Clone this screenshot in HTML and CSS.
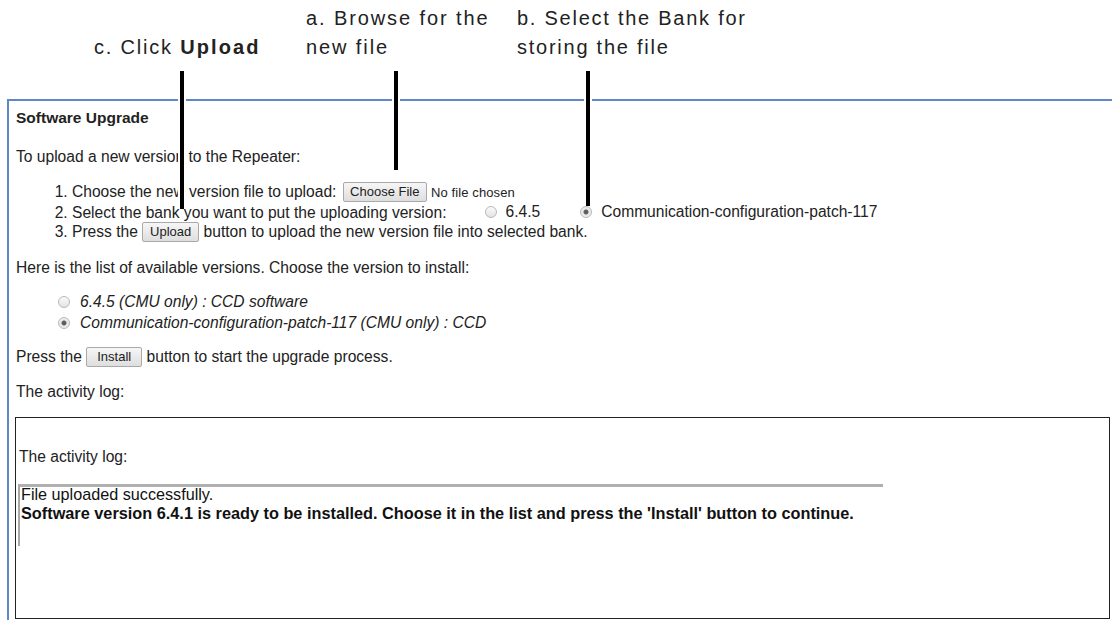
FILE: index.html
```html
<!DOCTYPE html>
<html>
<head>
<meta charset="utf-8">
<link rel="stylesheet" href="styles.css">
</head>
<body>
<div class="page">
  <div class="callouts">
    <div class="callout callout-c">c. Click <b>Upload</b></div>
    <div class="callout callout-a">a. Browse for the<br>new file</div>
    <div class="callout callout-b">b. Select the Bank for<br>storing the file</div>
  </div>

  <div class="frame">
    <h1 class="title">Software Upgrade</h1>
    <p class="intro">To upload a new version to the Repeater:</p>
    <ol class="steps">
      <li>Choose the new version file to upload: <span class="btn btn-file">Choose File</span> <span class="nofile">No file chosen</span></li>
      <li>Select the bank you want to put the uploading version:<span class="bank bank-1"><span class="radio"></span>6.4.5</span><span class="bank bank-2"><span class="radio checked"></span>Communication-configuration-patch-117</span></li>
      <li>Press the <span class="btn btn-upload">Upload</span> button to upload the new version file into selected bank.</li>
    </ol>
    <p class="avail">Here is the list of available versions. Choose the version to install:</p>
    <ul class="versions">
      <li><span class="radio"></span><i>6.4.5 (CMU only) : CCD software</i></li>
      <li><span class="radio checked"></span><i>Communication-configuration-patch-117 (CMU only) : CCD</i></li>
    </ul>
    <p class="press">Press the <span class="btn btn-install">Install</span> button to start the upgrade process.</p>
    <p class="logtitle">The activity log:</p>
    <div class="logbox">
      <p class="logbox-title">The activity log:</p>
      <div class="logarea">
        <div class="logtext">
          <div>File uploaded successfully.</div>
          <div class="strong">Software version 6.4.1 is ready to be installed. Choose it in the list and press the 'Install' button to continue.</div>
        </div>
      </div>
    </div>
  </div>

  <span class="pointer pointer-c"></span>
  <span class="pointer pointer-a"></span>
  <span class="pointer pointer-b"></span>
</div>
</body>
</html>
```

FILE: styles.css
```css
html, body {
  margin: 0;
  padding: 0;
  background: #fff;
}
body {
  font-family: "Liberation Sans", Arial, sans-serif;
  color: #222;
  overflow: hidden;
}
.page {
  position: relative;
  width: 1112px;
  height: 620px;
  overflow: hidden;
}

/* callouts */
.callouts {
  display: flex;
  align-items: flex-start;
  height: 99px;
  padding-top: 4px;
  padding-left: 94px;
  box-sizing: border-box;
}
.callout {
  font-size: 20px;
  line-height: 29px;
  letter-spacing: 1.9px;
  color: #222;
}
.callout-c {
  width: 212px;
  margin-top: 29px;
  letter-spacing: 1.8px;
}
.callout-c b {
  letter-spacing: 2.1px;
}
.callout-a {
  width: 211px;
}
.callout-b {
  letter-spacing: 1.75px;
}

/* pointers (overlay) */
.pointer {
  position: absolute;
  top: 71px;
  width: 4px;
  background: #000;
  border-left: 2px solid #fff;
  border-right: 2px solid #fff;
}
.pointer-c { left: 178px; height: 138px; }
.pointer-a { left: 392px; height: 99px; }
.pointer-b { left: 584px; height: 135px; }

/* frame */
.frame {
  margin-left: 7px;
  border-top: 2px solid #5f89c5;
  border-left: 2px solid #5f89c5;
  padding-left: 7px;
  padding-right: 2px;
  font-size: 15.6px;
  line-height: 16px;
  height: 560px;
  box-sizing: border-box;
}
.title {
  font-size: 15.5px;
  font-weight: bold;
  margin: 9px 0 0;
  line-height: 16px;
}
.intro {
  margin: 23px 0 0;
}
.steps {
  margin: 17px 0 0;
  padding-left: 56px;
  line-height: 20px;
}
.steps li {
  height: 20px;
}
.btn {
  display: inline-block;
  box-sizing: border-box;
  height: 20px;
  line-height: 18px;
  font-size: 13px;
  border: 1px solid #a9a9a9;
  border-radius: 2px;
  background: linear-gradient(#f6f6f6, #dedede);
  color: #222;
  vertical-align: middle;
  text-align: center;
  position: relative;
  top: -1px;
}
.btn-file { width: 84px; margin-left: 2px; }
.btn-upload { width: 57px; }
.btn-install { width: 56px; }
.nofile {
  font-size: 13px;
  letter-spacing: 0.1px;
}
.bank {
  display: inline-flex;
  align-items: center;
}
.bank-1 { margin-left: 38px; }
.bank-2 { margin-left: 40px; }
.bank .radio { margin-right: 9px; }

.radio {
  display: inline-block;
  width: 12px;
  height: 12px;
  box-sizing: border-box;
  border-radius: 50%;
  border: 1px solid #b9b9b9;
  background: linear-gradient(#fafafa, #e4e4e4);
  vertical-align: middle;
  flex: none;
}
.radio.checked {
  background: radial-gradient(circle, #555 0, #666 2px, #e8e8e8 3px, #f4f4f4 100%);
}

.avail {
  margin: 18px 0 0;
}
.versions {
  list-style: none;
  margin: 15px 0 0;
  padding-left: 42px;
  line-height: 21px;
}
.versions li {
  display: flex;
  align-items: center;
  height: 21px;
}
.versions .radio {
  margin-right: 10px;
}
.press {
  margin: 14px 0 0;
  line-height: 20px;
}
.logtitle {
  margin: 16px 0 0;
}
.logbox {
  margin: 17px 0 0 -1px;
  border: 1px solid #222;
  height: 202px;
  box-sizing: border-box;
  padding: 31px 3px 0 2px;
}
.logbox-title {
  margin: 0;
  padding-left: 1px;
}
.logarea {
  margin-top: 19px;
  width: 865px;
  height: 62px;
  box-sizing: border-box;
  border-top: 3px solid #b0b0b0;
  border-left: 2px solid #a8a8a8;
  padding-left: 1px;
  color: #111;
}
.logtext {
  font-size: 16.2px;
  line-height: 19px;
  margin-top: -2px;
}
.strong {
  font-weight: bold;
  font-size: 16.3px;
}
```
